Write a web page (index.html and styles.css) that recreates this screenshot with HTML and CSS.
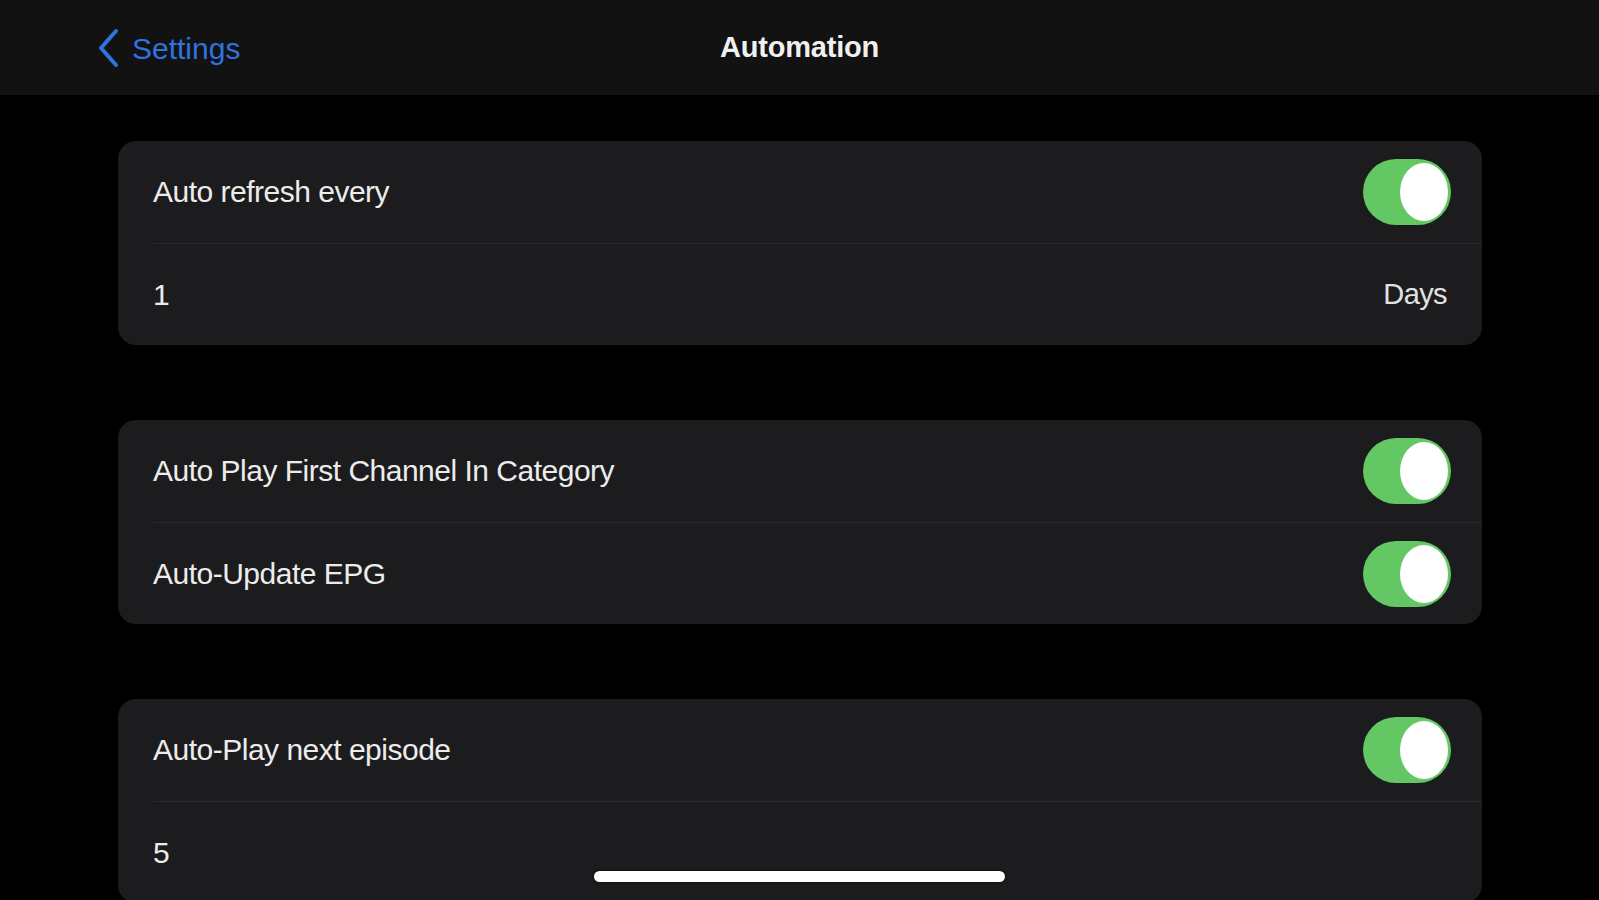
FILE: index.html
```html
<!DOCTYPE html>
<html lang="en">
<head>
<meta charset="utf-8">
<title>Automation</title>
<link rel="stylesheet" href="styles.css">
</head>
<body>
<div class="screen">
  <header class="nav">
    <a class="back" href="#">
      <svg class="chev" width="22" height="40" viewBox="0 0 22 40"><path d="M19 3 L4 20 L19 37" fill="none" stroke="#2f73e0" stroke-width="4" stroke-linecap="round" stroke-linejoin="round"/></svg>
      <span>Settings</span>
    </a>
    <h1 class="title">Automation</h1>
    <div class="spacer"></div>
  </header>
  <main class="content">
    <section class="card">
      <div class="row"><div class="row-inner"><span class="label">Auto refresh every</span><span class="toggle"><span class="knob"></span></span></div></div>
      <div class="row"><div class="row-inner divided"><span class="label">1</span><span class="value">Days</span></div></div>
    </section>
    <section class="card">
      <div class="row"><div class="row-inner"><span class="label">Auto Play First Channel In Category</span><span class="toggle"><span class="knob"></span></span></div></div>
      <div class="row"><div class="row-inner divided"><span class="label">Auto-Update EPG</span><span class="toggle"><span class="knob"></span></span></div></div>
    </section>
    <section class="card">
      <div class="row"><div class="row-inner"><span class="label">Auto-Play next episode</span><span class="toggle"><span class="knob"></span></span></div></div>
      <div class="row"><div class="row-inner divided"><span class="label">5</span></div></div>
    </section>
  </main>
  <div class="home-indicator"></div>
</div>
</body>
</html>
```
FILE: styles.css
```css
html, body {
  margin: 0;
  padding: 0;
  background: #000;
}
body {
  font-family: "Liberation Sans", Arial, sans-serif;
  color: #ebebeb;
}
.screen {
  position: relative;
  width: 1599px;
  height: 900px;
  overflow: hidden;
  background: #000;
}
.nav {
  height: 95px;
  background: #121212;
  display: grid;
  grid-template-columns: 1fr auto 1fr;
  align-items: center;
}
.back {
  display: flex;
  align-items: center;
  gap: 13px;
  padding-left: 97px;
  color: #2f73e0;
  text-decoration: none;
  font-size: 30px;
}
.back span { position: relative; top: 1px; }
.chev { display: block; }
.title {
  margin: 0;
  font-size: 29px;
  font-weight: 700;
  color: #f0f0f0;
  letter-spacing: -0.2px;
}
.content {
  padding: 46px 117px 0 118px;
  display: flex;
  flex-direction: column;
  gap: 75px;
}
.card {
  background: #1c1c1e;
  border-radius: 18px;
  overflow: hidden;
  flex-shrink: 0;
}
.row {
  padding-left: 35px;
}
.row-inner {
  height: 102px;
  padding-right: 30px;
  display: flex;
  align-items: center;
  justify-content: space-between;
  box-sizing: border-box;
}
.row-inner.divided {
  border-top: 1px solid #2a2a2c;
}
.label {
  font-size: 30px;
  letter-spacing: -0.5px;
  color: #ececec;
}
.value {
  font-size: 29px;
  letter-spacing: -0.6px;
  color: #e2e2e2;
  margin-right: 5px;
}
.toggle {
  width: 88px;
  height: 66px;
  border-radius: 33px;
  background: #63c764;
  display: flex;
  align-items: center;
  justify-content: flex-end;
  padding-right: 3px;
  box-sizing: border-box;
  margin-right: 1px;
}
.knob {
  width: 48px;
  height: 58px;
  border-radius: 50%;
  background: #fff;
}
.home-indicator {
  position: absolute;
  left: 594px;
  top: 871px;
  width: 411px;
  height: 11px;
  border-radius: 6px;
  background: #fff;
  box-shadow: 0 0 3px rgba(0,0,0,0.8);
}
```
